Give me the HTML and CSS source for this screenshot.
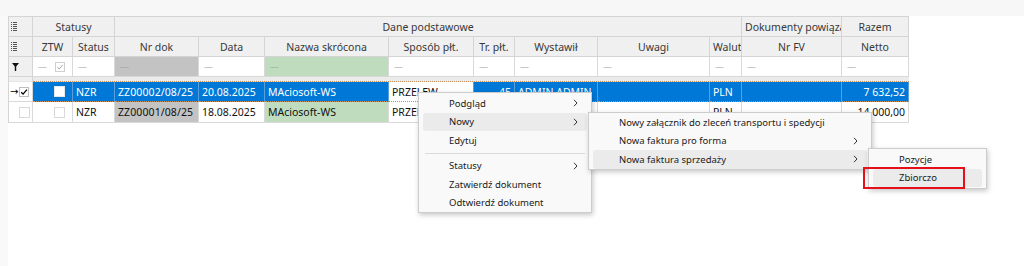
FILE: index.html
```html
<!DOCTYPE html>
<html lang="pl">
<head>
<meta charset="utf-8">
<title>Lista dokumentów</title>
<link rel="stylesheet" href="styles.css">
</head>
<body>
<div class="page">
  <div class="topbar"></div>
  <div class="content">
    <div class="gutter"></div>
    <div class="grid">
      <!-- header row 1 -->
      <div class="c hd ind"><svg class="colicon" width="6" height="9" viewBox="0 0 6 9"><g fill="#555"><rect x="0" y="0" width="1" height="1"/><rect x="0" y="2" width="1" height="1"/><rect x="0" y="4" width="1" height="1"/><rect x="0" y="6" width="1" height="1"/><rect x="0" y="8" width="1" height="1"/><rect x="2" y="0" width="4" height="1"/><rect x="2" y="2" width="4" height="1"/><rect x="2" y="4" width="4" height="1"/><rect x="2" y="6" width="4" height="1"/><rect x="2" y="8" width="4" height="1"/></g></svg></div>
      <div class="c hd ctr s2">Statusy</div>
      <div class="c hd ctr s8">Dane podstawowe</div>
      <div class="c hd">Dokumenty powiązane</div>
      <div class="c hd ctr">Razem</div>

      <!-- header row 2 -->
      <div class="c hd ind"><svg class="colicon" width="6" height="9" viewBox="0 0 6 9"><g fill="#555"><rect x="0" y="0" width="1" height="1"/><rect x="0" y="2" width="1" height="1"/><rect x="0" y="4" width="1" height="1"/><rect x="0" y="6" width="1" height="1"/><rect x="0" y="8" width="1" height="1"/><rect x="2" y="0" width="4" height="1"/><rect x="2" y="2" width="4" height="1"/><rect x="2" y="4" width="4" height="1"/><rect x="2" y="6" width="4" height="1"/><rect x="2" y="8" width="4" height="1"/></g></svg></div>
      <div class="c hd ctr">ZTW</div>
      <div class="c hd ctr">Status</div>
      <div class="c hd ctr">Nr dok</div>
      <div class="c hd ctr">Data</div>
      <div class="c hd ctr">Nazwa skrócona</div>
      <div class="c hd ctr">Sposób płt.</div>
      <div class="c hd ctr">Tr. płt.</div>
      <div class="c hd ctr">Wystawił</div>
      <div class="c hd ctr">Uwagi</div>
      <div class="c hd">Waluta</div>
      <div class="c hd ctr">Nr FV</div>
      <div class="c hd ctr">Netto</div>

      <!-- filter row -->
      <div class="c hd ind"><svg class="funnel" width="7" height="8" viewBox="0 0 7 8"><path d="M0 0H7L4.2 3.6V8H2.8V3.6Z" fill="#111"/></svg></div>
      <div class="c f ztwf"><span class="dash">—</span><span class="cb cb-dis"><svg width="8" height="8" viewBox="0 0 8 8"><path d="M1.3 4.2L3.2 6L6.8 1.8" fill="none" stroke="#a8a8a8" stroke-width="1"/></svg></span></div>
      <div class="c f"><span class="dash">—</span></div>
      <div class="c f gray"><span class="dash">—</span></div>
      <div class="c f"><span class="dash">—</span></div>
      <div class="c f green"><span class="dash">—</span></div>
      <div class="c f"><span class="dash">—</span></div>
      <div class="c f"><span class="dash">—</span></div>
      <div class="c f"><span class="dash">—</span></div>
      <div class="c f"><span class="dash">—</span></div>
      <div class="c f"><span class="dash">—</span></div>
      <div class="c f"><span class="dash">—</span></div>
      <div class="c f"><span class="dash">—</span></div>

      <!-- separator -->
      <div class="c hd ind sepind"></div>
      <div class="c sep s12"></div>

      <!-- row 1 (selected) -->
      <div class="c ind rowind"><span class="arrow">→</span><span class="cb"><svg width="8" height="8" viewBox="0 0 8 8"><path d="M1.2 4.2L3.1 6.1L6.9 1.6" fill="none" stroke="#000" stroke-width="1.3"/></svg></span></div>
      <div class="c sel ztw"><span class="cb cb-white"></span></div>
      <div class="c sel">NZR</div>
      <div class="c sel nr">ZZ00002/08/25</div>
      <div class="c sel">20.08.2025</div>
      <div class="c sel">MAciosoft-WS</div>
      <div class="c sel edit">PRZELEW</div>
      <div class="c sel r">45</div>
      <div class="c sel">ADMIN ADMIN</div>
      <div class="c sel"></div>
      <div class="c sel">PLN</div>
      <div class="c sel"></div>
      <div class="c sel r">7 632,52</div>

      <!-- row 2 -->
      <div class="c ind rowind2"><span class="cb cb-light"></span></div>
      <div class="c ztw"><span class="cb cb-light"></span></div>
      <div class="c">NZR</div>
      <div class="c gray nr">ZZ00001/08/25</div>
      <div class="c">18.08.2025</div>
      <div class="c green">MAciosoft-WS</div>
      <div class="c">PRZELEW</div>
      <div class="c r">14</div>
      <div class="c">ADMIN ADMIN</div>
      <div class="c"></div>
      <div class="c">PLN</div>
      <div class="c"></div>
      <div class="c r">14 000,00</div>
    </div>
  </div>

  <div class="menu m1">
    <div class="item"><span>Podgląd</span><svg class="chev" width="5" height="8" viewBox="0 0 5 8"><path d="M1 0.8L4 4L1 7.2" fill="none" stroke="#333" stroke-width="1"/></svg></div>
    <div class="item hover"><span>Nowy</span><svg class="chev" width="5" height="8" viewBox="0 0 5 8"><path d="M1 0.8L4 4L1 7.2" fill="none" stroke="#333" stroke-width="1"/></svg></div>
    <div class="item"><span>Edytuj</span></div>
    <div class="msep"></div>
    <div class="item"><span>Statusy</span><svg class="chev" width="5" height="8" viewBox="0 0 5 8"><path d="M1 0.8L4 4L1 7.2" fill="none" stroke="#333" stroke-width="1"/></svg></div>
    <div class="item"><span>Zatwierdź dokument</span></div>
    <div class="item"><span>Odtwierdź dokument</span></div>
  </div>

  <div class="menu m2">
    <div class="item"><span>Nowy załącznik do zleceń transportu i spedycji</span></div>
    <div class="item"><span>Nowa faktura pro forma</span><svg class="chev" width="5" height="8" viewBox="0 0 5 8"><path d="M1 0.8L4 4L1 7.2" fill="none" stroke="#333" stroke-width="1"/></svg></div>
    <div class="item hover"><span>Nowa faktura sprzedaży</span><svg class="chev" width="5" height="8" viewBox="0 0 5 8"><path d="M1 0.8L4 4L1 7.2" fill="none" stroke="#333" stroke-width="1"/></svg></div>
  </div>

  <div class="menu m3">
    <div class="item"><span>Pozycje</span></div>
    <div class="item hover"><span>Zbiorczo</span></div>
  </div>

  <div class="mark"></div>
</div>
</body>
</html>
```

FILE: styles.css
```css
* { box-sizing: border-box; }

html, body {
  margin: 0;
  padding: 0;
  background: #ffffff;
}

body {
  width: 1024px;
  height: 266px;
  overflow: hidden;
  font-family: "Noto Sans", "Liberation Sans", sans-serif;
  color: #111;
}

.page {
  position: relative;
  width: 1024px;
  height: 266px;
}

.topbar {
  height: 16px;
  background: #f7f7f7;
}

.content {
  display: flex;
  align-items: flex-start;
}

.gutter {
  width: 8px;
  height: 250px;
  background: #f9f9f9;
}

.grid {
  display: grid;
  grid-template-columns: 24px 40px 42px 84px 66px 124px 85px 41px 83px 112px 32px 100px 67px;
  grid-template-rows: 20px 20px 20px 5px 20px 21px;
  border-top: 1px solid #d4d4d4;
  border-left: 1px solid #d4d4d4;
  width: 901px;
  font-size: 10.5px;
}

.c {
  display: flex;
  align-items: center;
  padding: 0 3px;
  border-right: 1px solid #d9d9d9;
  border-bottom: 1px solid #d9d9d9;
  white-space: nowrap;
  overflow: hidden;
  background: #fff;
  min-width: 0;
}

.s2 { grid-column: span 2; }
.s8 { grid-column: span 8; }
.s12 { grid-column: span 12; }

.hd {
  background: #f0f0f0;
  color: #383838;
  border-color: #d4d4d4;
  font-size: 10.5px;
}

.ctr { justify-content: center; }
.r { justify-content: flex-end; }

.ind {
  padding: 0 0 0 2px;
}

.colicon { display: block; }
.funnel { display: block; margin-left: 1px; }

.f { color: #999; }

.dash {
  font-size: 9px;
  color: #a0a0a0;
  margin-left: 2px;
}

.ztwf {
  justify-content: space-between;
  padding-right: 7px;
}

.gray { background: #c3c3c3; }
.green { background: #bfdcbf; }

.sep {
  background: #ebebeb;
  border-right: none;
  border-bottom: 1px dotted #c9915c;
}

.sepind { border-bottom: 1px solid #e6e6e6; }

.sel {
  background: #0078d7;
  color: #fff;
  border-right-color: #5a9fdc;
  border-bottom: 1px dotted #c9915c;
}

.sel.edit {
  background: #fff;
  color: #111;
}

.nr { letter-spacing: 0.1px; }

.ztw {
  justify-content: flex-end;
  padding-right: 7px;
}

.rowind {
  background: #fff;
  padding-left: 1px;
  gap: 1px;
}

.rowind2 {
  background: #fff;
  justify-content: flex-end;
  padding: 0 2px 0 0;
}

.arrow {
  font-size: 10px;
  line-height: 1;
  color: #000;
  font-family: "DejaVu Sans", sans-serif;
}

.cb {
  display: inline-flex;
  align-items: center;
  justify-content: center;
  width: 10px;
  height: 10px;
  border: 1px solid #bdbdbd;
  background: #fff;
  flex: none;
}

.cb svg { display: block; }

.cb-dis { border-color: #cfcfcf; }

.cb-white {
  width: 11px;
  height: 11px;
  border-color: #e8e8e8;
  background: #fff;
}

.cb-light {
  width: 11px;
  height: 11px;
  border-color: #d9d9d9;
}

/* context menus */
.menu {
  position: absolute;
  background: #f9f9f9;
  border: 1px solid #cccccc;
  box-shadow: 1px 2px 5px rgba(0, 0, 0, 0.22);
  font-size: 9.5px;
  color: #1a1a1a;
  padding: 1px 0 0;
}

.m1 { left: 418px; top: 92px; width: 174px; height: 121px; }
.m2 { left: 588px; top: 112px; width: 284px; height: 58px; padding-top: 0; }
.m3 { left: 868px; top: 148px; width: 119px; height: 41px; }

.item {
  height: 18.5px;
  margin: 0 4px;
  padding: 0 9px 0 26px;
  display: flex;
  align-items: center;
  justify-content: space-between;
  border-radius: 3px;
}

.item.hover { background: #ebebeb; }

.chev { display: block; flex: none; }

.msep {
  height: 7px;
  display: flex;
  align-items: center;
  margin: 0 6px;
}

.msep::before {
  content: "";
  display: block;
  width: 100%;
  height: 1px;
  background: #dadada;
}

.mark {
  position: absolute;
  left: 863px;
  top: 167px;
  width: 102px;
  height: 22px;
  border: 2px solid #e5101a;
}
```
